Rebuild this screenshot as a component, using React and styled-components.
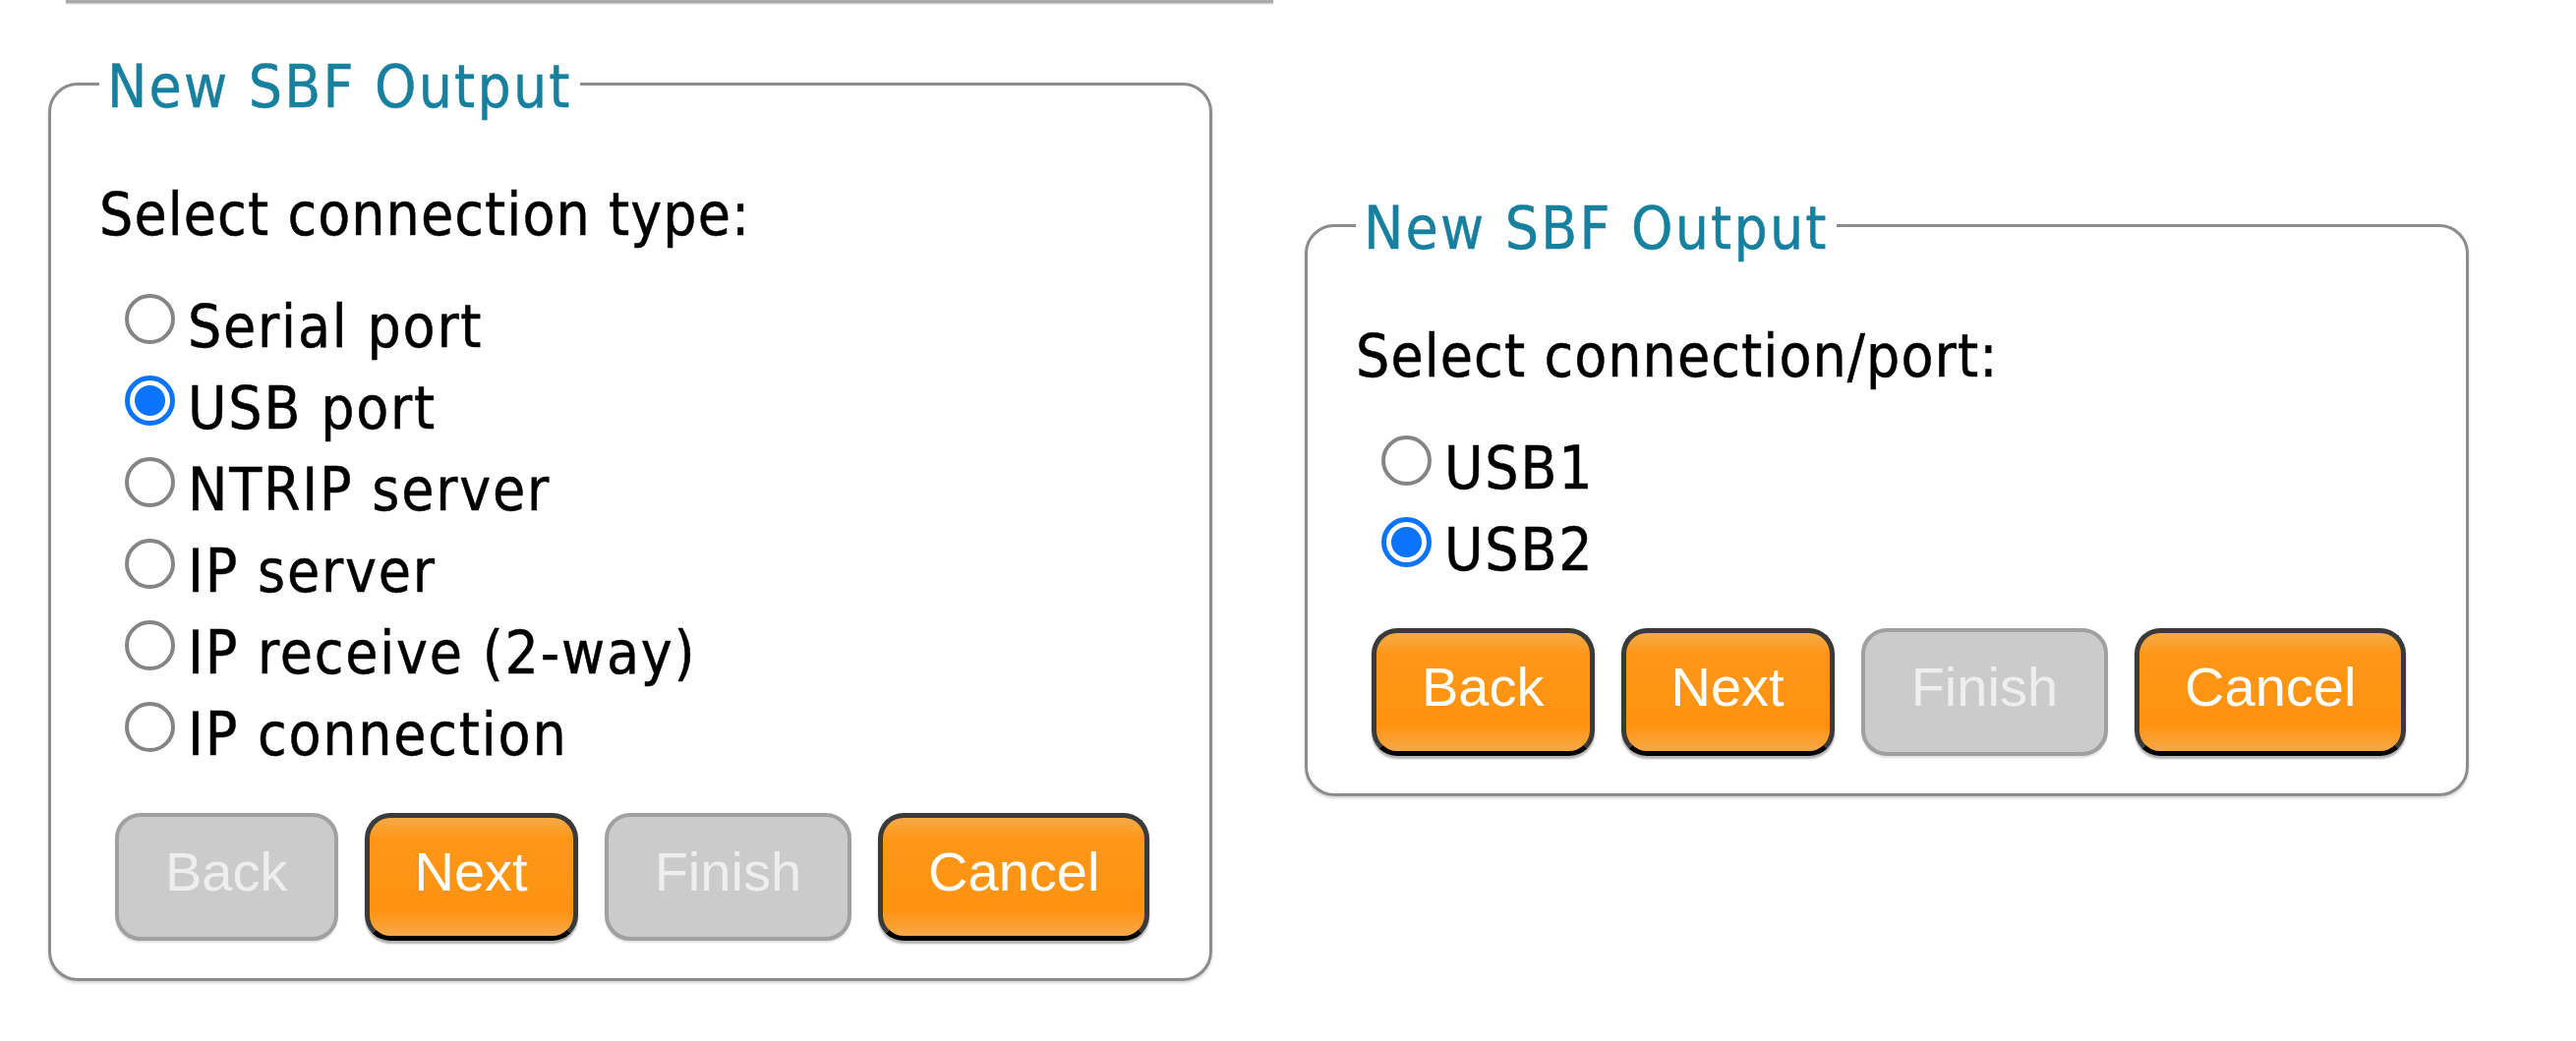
import React from "react";
import styled, { createGlobalStyle } from "styled-components";

const GlobalStyle = createGlobalStyle`
  html, body {
    margin: 0;
    padding: 0;
    background: #ffffff;
  }
  body {
    font-family: "DejaVu Sans Condensed", "DejaVu Sans", sans-serif;
    color: #000;
  }
`;

const Page = styled.div`
  width: 2620px;
  height: 1059px;
  overflow: hidden;
`;

const TopRule = styled.div`
  margin-left: 67px;
  width: 1228px;
  height: 0;
  border-top: 3px solid #a9a9a9;
  box-shadow: 0 1px 2px rgba(0, 0, 0, 0.25);
`;

const Panels = styled.div`
  display: flex;
  align-items: flex-start;
  gap: 94px;
  margin-top: 49px;
  padding-left: 49px;
`;

const Wizard = styled.fieldset`
  box-sizing: border-box;
  width: 1184px;
  min-width: 0;
  margin: ${(p) => p.$offset || 0}px 0 0 0;
  padding: 59px 40px 38px 49px;
  border: 3px solid #8c8c8c;
  border-radius: 30px;
  box-shadow: 0 2px 3px rgba(0, 0, 0, 0.18);
`;

const Title = styled.legend`
  padding: 6px 8px 0 8px;
  font-size: 60px;
  line-height: 60px;
  letter-spacing: 2.2px;
  color: #17809f;
  -webkit-text-stroke: 0.4px #17809f;
`;

const Prompt = styled.div`
  font-size: 60px;
  line-height: 83px;
  letter-spacing: 1.1px;
  margin-bottom: 31px;
  -webkit-text-stroke: 0.5px #000;
`;

const Options = styled.div`
  display: flex;
  flex-direction: column;
`;

const Option = styled.label`
  display: flex;
  align-items: flex-start;
  gap: 13px;
  height: 83px;
  padding-left: 26px;
  font-size: 60px;
  line-height: 83px;
  letter-spacing: 1.8px;
  -webkit-text-stroke: 0.5px #000;
`;

const Radio = styled.input.attrs({ type: "radio" })`
  appearance: none;
  box-sizing: border-box;
  width: 51px;
  height: 51px;
  margin: 8px 0 0 0;
  flex: none;
  border: 4px solid #858585;
  border-radius: 50%;
  background: #fff;

  &:checked {
    border: 5px solid #0a74ff;
    background: radial-gradient(circle, #0a74ff 0 15px, #ffffff 16px);
  }
`;

const Buttons = styled.div`
  display: flex;
  gap: 27px;
  margin-top: 38px;
  padding-left: 16px;
`;

const WizardButton = styled.button`
  box-sizing: border-box;
  height: 130px;
  display: inline-flex;
  align-items: center;
  padding: 0 46px 10px;
  border-radius: 26px;
  font-family: "Liberation Sans", Arial, sans-serif;
  font-size: 56px;
  line-height: 62px;
  border: 5px solid #3a3a3a;
  border-bottom-color: #000;
  color: #ffffff;
  background: linear-gradient(
    #f6aa48 0%,
    #ff9617 18%,
    #ff9310 78%,
    #f7a84a 100%
  );
  box-shadow: 0 3px 2px rgba(0, 0, 0, 0.3);

  &:disabled {
    border: 4px solid #a0a0a0;
    color: #eeeeee;
    background: #cbcbcb;
    box-shadow: 0 2px 2px rgba(0, 0, 0, 0.12);
    padding: 0 47px 10px;
  }
`;

function Panel({ prompt, name, options, selected, backEnabled, offset }) {
  return (
    <Wizard $offset={offset}>
      <Title>New SBF Output</Title>
      <Prompt>{prompt}</Prompt>
      <Options>
        {options.map((opt) => (
          <Option key={opt}>
            <Radio name={name} defaultChecked={opt === selected} />
            <span>{opt}</span>
          </Option>
        ))}
      </Options>
      <Buttons>
        <WizardButton disabled={!backEnabled}>Back</WizardButton>
        <WizardButton>Next</WizardButton>
        <WizardButton disabled>Finish</WizardButton>
        <WizardButton>Cancel</WizardButton>
      </Buttons>
    </Wizard>
  );
}

export default function App() {
  return (
    <Page>
      <GlobalStyle />
      <TopRule />
      <Panels>
        <Panel
          prompt="Select connection type:"
          name="conntype"
          options={[
            "Serial port",
            "USB port",
            "NTRIP server",
            "IP server",
            "IP receive (2-way)",
            "IP connection",
          ]}
          selected="USB port"
          backEnabled={false}
        />
        <Panel
          prompt="Select connection/port:"
          name="port"
          options={["USB1", "USB2"]}
          selected="USB2"
          backEnabled={true}
          offset={144}
        />
      </Panels>
    </Page>
  );
}
